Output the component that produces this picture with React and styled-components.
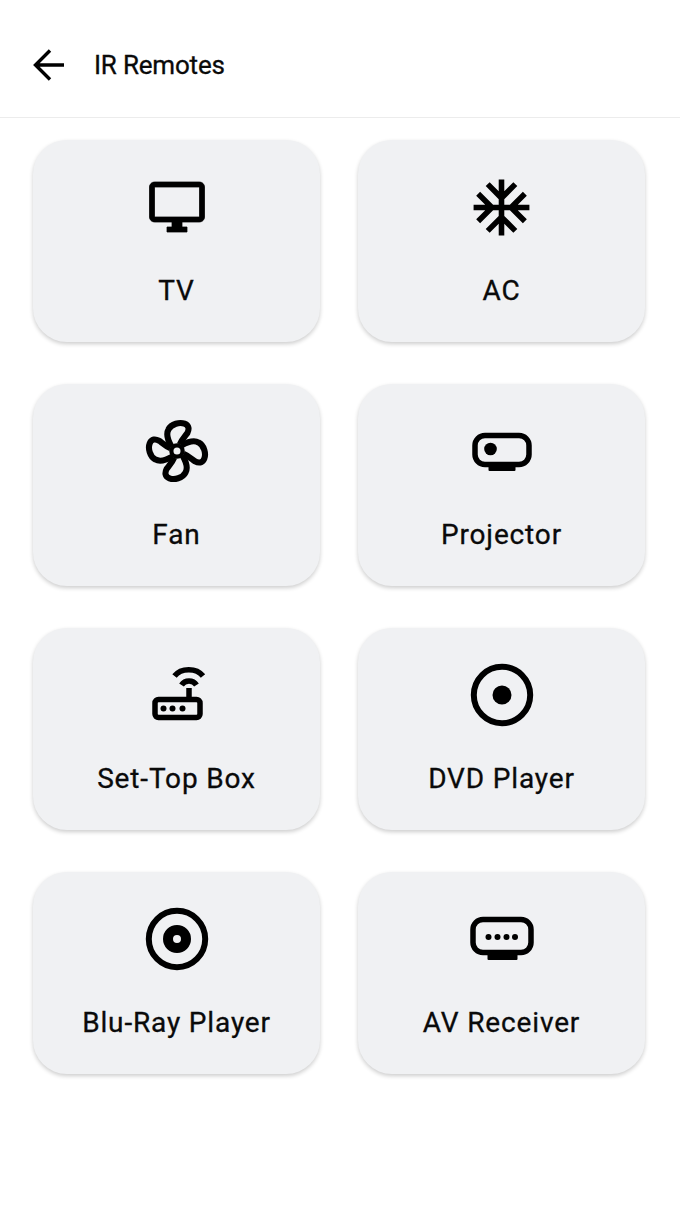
import React from 'react';
import styled, { createGlobalStyle } from 'styled-components';

const GlobalStyle = createGlobalStyle`
  html, body {
    margin: 0;
    padding: 0;
    background: #fff;
    font-family: Roboto, "Liberation Sans", sans-serif;
    color: #0a0a0a;
  }
`;

const Page = styled.div`
  width: 680px;
  height: 1221px;
  background: #fff;
  overflow: hidden;
`;

const Header = styled.header`
  display: flex;
  align-items: center;
  gap: 28px;
  height: 105px;
  padding: 12px 0 0 32px;
  border-bottom: 1px solid #ececec;
`;

const Title = styled.h1`
  margin: 0;
  font-size: 26px;
  font-weight: 400;
  letter-spacing: -0.2px;
  -webkit-text-stroke: 0.3px #0a0a0a;
`;

const Grid = styled.main`
  display: grid;
  grid-template-columns: 287px 287px;
  grid-auto-rows: 202px;
  column-gap: 38px;
  row-gap: 42px;
  padding: 22px 0 0 33px;
`;

const Card = styled.div`
  display: flex;
  flex-direction: column;
  align-items: center;
  background: #f0f1f3;
  border-radius: 34px;
  box-shadow: 0 2px 4px rgba(0, 0, 0, 0.2);
`;

const IconSlot = styled.div`
  display: flex;
  align-items: center;
  justify-content: center;
  height: 134px;
  width: 100%;
`;

const Label = styled.span`
  font-size: 28px;
  line-height: 33px;
  font-weight: 400;
  letter-spacing: 0.85px;
  -webkit-text-stroke: 0.3px #0a0a0a;
`;

const Glyph = styled.svg`
  display: block;
  width: ${(p) => p.$size}px;
  height: ${(p) => p.$size}px;
  fill: #000;
`;

const Outline = styled.g`
  fill: none;
  stroke: #000;
  stroke-width: ${(p) => p.$weight}px;
  stroke-linejoin: round;
`;

const BackArrow = () => (
  <svg width="34" height="34" viewBox="0 0 34 34" fill="none" stroke="#000" strokeWidth="3.4">
    <path d="M3.5 17H32M18 2.5 3.5 17 18 31.5" />
  </svg>
);

const TvIcon = () => (
  <Glyph $size={60} viewBox="0 0 24 24" stroke="#000" strokeWidth="0.3">
    <path d="M21 2H3c-1.1 0-2 .9-2 2v12c0 1.1.9 2 2 2h7v2H8v2h8v-2h-2v-2h7c1.1 0 2-.9 2-2V4c0-1.1-.9-2-2-2zm0 14H3V4h18v12z" />
  </Glyph>
);

const AcIcon = () => (
  <Glyph $size={67} viewBox="0 0 24 24">
    <path d="M22 11h-4.17l3.24-3.24-1.41-1.42L15 11h-2V9l4.66-4.66-1.42-1.41L13 6.17V2h-2v4.17L7.76 2.93 6.34 4.34 11 9v2H9L4.34 6.34 2.93 7.76 6.17 11H2v2h4.17l-3.24 3.24 1.41 1.42L9 13h2v2l-4.66 4.66 1.42 1.41L11 17.83V22h2v-4.17l3.24 3.24 1.42-1.41L13 15v-2h2l4.66 4.66 1.41-1.42L17.83 13H22z" />
  </Glyph>
);

const blade = 'M-6 -5C-10 -12 -12 -18 -9 -23C-6 -29 3 -31 8 -29C13 -27 13 -23 11 -19C8 -15 5 -12 3 -7';

const FanIcon = () => (
  <Glyph $size={64} viewBox="-34 -34 68 68">
    <Outline $weight={6.5}>
      {[0, 90, 180, 270].map((deg) => (
        <path key={deg} d={blade} transform={`rotate(${deg})`} />
      ))}
      <circle r="6" strokeWidth="4.5" />
    </Outline>
  </Glyph>
);

const ProjectorIcon = () => (
  <Glyph $size={68} viewBox="0 0 68 68">
    <Outline $weight={5.5}>
      <rect x="7" y="18.5" width="54" height="29" rx="10" />
    </Outline>
    <rect x="20.5" y="49" width="27" height="5" rx="1" />
    <circle cx="22.5" cy="32" r="6.3" />
  </Glyph>
);

const RouterIcon = () => (
  <Glyph $size={68} viewBox="0 0 68 68">
    <Outline $weight={5.5}>
      <rect x="12" y="38.5" width="45" height="18" rx="3.5" />
      <path d="M31.5 15C38 6.5 53.5 6.5 60 15M38.5 24C42 18.5 50 18.5 53.5 24" />
      <path d="M46 27V38" />
    </Outline>
    <circle cx="20.5" cy="47.5" r="3" />
    <circle cx="29.5" cy="47.5" r="3" />
    <circle cx="39.5" cy="47.5" r="3" />
  </Glyph>
);

const DvdIcon = () => (
  <Glyph $size={68} viewBox="-34 -34 68 68">
    <Outline $weight={6}>
      <circle r="28.2" />
    </Outline>
    <circle r="9.5" />
  </Glyph>
);

const BluRayIcon = () => (
  <Glyph $size={68} viewBox="-34 -34 68 68">
    <Outline $weight={6}>
      <circle r="28.2" />
    </Outline>
    <Outline $weight={10}>
      <circle r="9" />
    </Outline>
  </Glyph>
);

const ReceiverIcon = () => (
  <Glyph $size={68} viewBox="0 0 68 68">
    <Outline $weight={5.5}>
      <rect x="5" y="14.5" width="58" height="33" rx="10" />
    </Outline>
    <rect x="19.5" y="49" width="30" height="6" rx="1" />
    <circle cx="20.5" cy="32" r="3" />
    <circle cx="29.5" cy="32" r="3" />
    <circle cx="38.5" cy="32" r="3" />
    <circle cx="47" cy="32" r="3" />
  </Glyph>
);

const remotes = [
  { name: 'TV', Icon: TvIcon },
  { name: 'AC', Icon: AcIcon },
  { name: 'Fan', Icon: FanIcon },
  { name: 'Projector', Icon: ProjectorIcon },
  { name: 'Set-Top Box', Icon: RouterIcon },
  { name: 'DVD Player', Icon: DvdIcon },
  { name: 'Blu-Ray Player', Icon: BluRayIcon },
  { name: 'AV Receiver', Icon: ReceiverIcon },
];

const App = () => (
  <Page>
    <GlobalStyle />
    <Header>
      <BackArrow />
      <Title>IR Remotes</Title>
    </Header>
    <Grid>
      {remotes.map(({ name, Icon }) => (
        <Card key={name}>
          <IconSlot>
            <Icon />
          </IconSlot>
          <Label>{name}</Label>
        </Card>
      ))}
    </Grid>
  </Page>
);

export default App;
